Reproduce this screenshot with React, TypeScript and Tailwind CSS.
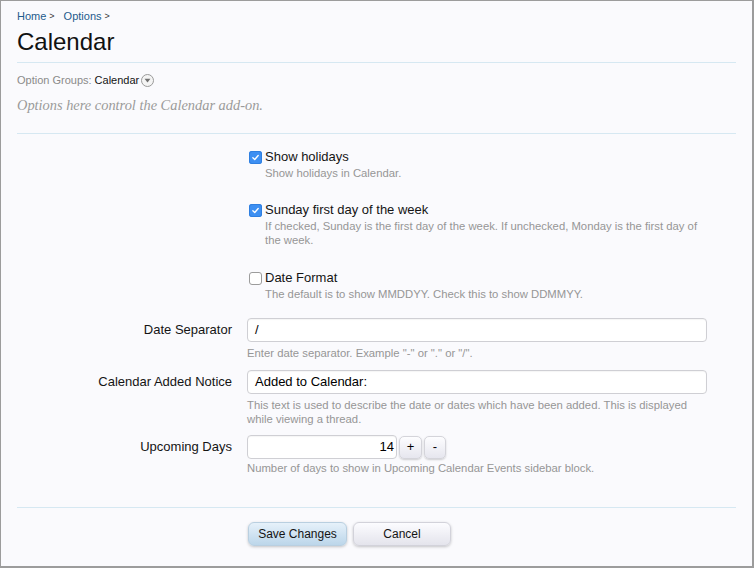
import type { ReactNode } from "react";

const sans = "font-['Liberation_Sans',Arial,sans-serif]";

function Check({ checked }: { checked: boolean }) {
  return checked ? (
    <span className="flex h-[13px] w-[13px] shrink-0 items-center justify-center rounded-[3px] bg-[#3d8ff2] shadow-[inset_0_0_0_1px_#2f7fe0]">
      <svg viewBox="0 0 12 12" className="h-[9px] w-[9px]" fill="none">
        <path d="M2.5 6.3 5 8.7 9.6 3.4" stroke="#fff" strokeWidth="1.8" strokeLinecap="round" strokeLinejoin="round" />
      </svg>
    </span>
  ) : (
    <span className="h-[13px] w-[13px] shrink-0 rounded-[3px] border border-[#9c9c9c] bg-white" />
  );
}

function CheckRow({ checked, label, children }: { checked: boolean; label: string; children: ReactNode }) {
  return (
    <>
      <div />
      <div className="pl-[2px]">
        <div className="flex h-4 items-center gap-[3px]">
          <Check checked={checked} />
          <span className="text-[13px] text-[#141414]">{label}</span>
        </div>
        <p className="mt-[1px] pl-[16px] pr-1 text-[11.3px] leading-[14px] text-[#969696]">{children}</p>
      </div>
    </>
  );
}

function Hint({ children }: { children: ReactNode }) {
  return <p className="mt-[4px] text-[11.3px] leading-[14px] text-[#969696]">{children}</p>;
}

const inputCls =
  "h-[24px] rounded-[4px] border border-[#cfcfd4] bg-white px-[7px] text-[13px] text-black shadow-[inset_0_1px_1px_rgba(0,0,0,0.04)]";

export default function App() {
  return (
    <div className={`${sans} h-[568px] w-[754px] overflow-hidden border-l border-t border-r-2 border-b-2 border-[#9c9c9c] bg-[#fafafd]`}>
      <div className="px-[16px] pt-[8px]">
        <nav className="flex items-center text-[11px] leading-[14px]">
          <a className="text-[#1e5a8c]">Home</a>
          <span className="ml-[3px] text-[9px] text-[#333]">&gt;</span>
          <a className="ml-[9px] text-[#1e5a8c]">Options</a>
          <span className="ml-[3px] text-[9px] text-[#333]">&gt;</span>
        </nav>
        <h1 className="mt-[5px] text-[24px] leading-[28px] text-[#111]">Calendar</h1>
        <div className="mt-[6px] h-px bg-[#d6e8f2]" />

        <div className="mt-[10px] flex items-center text-[11px] leading-[14px]">
          <span className="text-[#8a8a8a]">Option Groups:</span>
          <span className="ml-[3px] text-[#141414]">Calendar</span>
          <span className="ml-[2px] flex h-[13px] w-[13px] items-center justify-center rounded-full border border-[#9a9a9a] bg-[#f4f4f4]">
            <svg viewBox="0 0 8 6" className="h-[5px] w-[7px]">
              <path d="M0.5 0.8h7L4 5.3z" fill="#707070" />
            </svg>
          </span>
        </div>
        <p className="mt-[9px] font-['Liberation_Serif',Georgia,serif] text-[14.4px] italic leading-[18px] text-[#9a9a9a]">
          Options here control the Calendar add-on.
        </p>
        <div className="mt-[19px] h-px bg-[#d6e8f2]" />

        <div className="mt-[15px] grid grid-cols-[215px_460px] gap-x-[15px]">
          <CheckRow checked label="Show holidays">Show holidays in Calendar.</CheckRow>
          <div className="col-span-2 h-[22px]" />
          <CheckRow checked label="Sunday first day of the week">
            If checked, Sunday is the first day of the week. If unchecked, Monday is the first day of the week.
          </CheckRow>
          <div className="col-span-2 h-[23px]" />
          <CheckRow checked={false} label="Date Format">
            The default is to show MMDDYY. Check this to show DDMMYY.
          </CheckRow>
          <div className="col-span-2 h-[17px]" />

          <label className="flex h-[24px] items-center justify-end text-[13px] text-[#141414]">Date Separator</label>
          <div>
            <div className={`${inputCls} flex w-[460px] items-center`}>/</div>
            <Hint>Enter date separator. Example "-" or "." or "/".</Hint>
          </div>
          <div className="col-span-2 h-[10px]" />

          <label className="flex h-[24px] items-center justify-end text-[13px] text-[#141414]">Calendar Added Notice</label>
          <div>
            <div className={`${inputCls} flex w-[460px] items-center`}>Added to Calendar:</div>
            <Hint>
              This text is used to describe the date or dates which have been added. This is displayed while viewing a
              thread.
            </Hint>
          </div>
          <div className="col-span-2 h-[9px]" />

          <label className="flex h-[24px] items-center justify-end text-[13px] text-[#141414]">Upcoming Days</label>
          <div>
            <div className="flex items-center gap-[2px]">
              <div className={`${inputCls} flex w-[150px] items-center justify-end !pr-[2px]`}>14</div>
              <button className="flex h-[23px] w-[23px] items-center justify-center rounded-[5px] border border-[#d4d4da] bg-gradient-to-b from-[#fdfdff] to-[#e6e6ee] text-[13px] text-black shadow-[0_1px_2px_rgba(0,0,0,0.18)]">
                +
              </button>
              <button className="flex h-[23px] w-[22px] items-center justify-center rounded-[5px] border border-[#d4d4da] bg-gradient-to-b from-[#fdfdff] to-[#e6e6ee] text-[13px] text-black shadow-[0_1px_2px_rgba(0,0,0,0.18)]">
                -
              </button>
            </div>
            <p className="mt-[2px] text-[11.3px] leading-[14px] text-[#969696]">
              Number of days to show in Upcoming Calendar Events sidebar block.
            </p>
          </div>
        </div>

        <div className="mt-[32px] h-px bg-[#d6e8f2]" />
        <div className="mt-[14px] flex gap-[6px] pl-[231px]">
          <button className="h-[24px] w-[99px] rounded-[6px] border border-[#b9cfe0] bg-gradient-to-b from-[#e6f1fa] to-[#bcd6ea] text-[12px] text-[#141414] shadow-[0_1px_3px_rgba(0,0,0,0.22)]">
            Save Changes
          </button>
          <button className="h-[24px] w-[98px] rounded-[6px] border border-[#d2d2da] bg-gradient-to-b from-[#fcfcff] to-[#e4e4ec] text-[12px] text-[#141414] shadow-[0_1px_3px_rgba(0,0,0,0.22)]">
            Cancel
          </button>
        </div>
      </div>
    </div>
  );
}
